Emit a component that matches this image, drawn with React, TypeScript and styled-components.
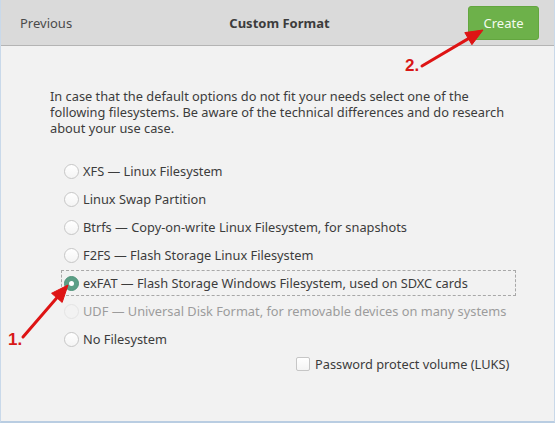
import React from "react";
import styled, { createGlobalStyle } from "styled-components";

const Global = createGlobalStyle`
  html, body { margin: 0; padding: 0; background: #f2f2f2; }
  body { font-family: "Noto Sans", "DejaVu Sans", sans-serif; }
  * { box-sizing: border-box; }
`;

const Window = styled.div`
  position: relative;
  width: 555px;
  height: 423px;
  background: #f2f2f2;
  border-left: 1px solid #c9d9ea;
  border-right: 1px solid #c9d9ea;
  border-bottom: 2px solid #b9cde2;
  display: flex;
  flex-direction: column;
  color: #3c3c3c;
  font-size: 12.8px;
  overflow: hidden;
`;

const Header = styled.div`
  height: 46px;
  flex: none;
  background: #dadada;
  border-bottom: 1px solid #b4b4b4;
  display: grid;
  grid-template-columns: 1fr auto 1fr;
  align-items: center;
  padding: 0 15px 0 19px;
`;

const HeaderText = styled.div`
  font-size: 13px;
  color: #4a4a4a;
`;

const Title = styled.div`
  font-size: 13px;
  font-weight: 700;
  color: #3c3c3c;
`;

const CreateButton = styled.button`
  justify-self: end;
  width: 71px;
  height: 34px;
  border: 1px solid #63a63f;
  border-radius: 3px;
  background: #6db14a;
  color: #f4fbef;
  font-family: inherit;
  font-size: 13px;
`;

const Body = styled.div`
  flex: 1;
  display: flex;
  flex-direction: column;
  padding: 42px 30px 0 49px;
`;

const Intro = styled.div`
  display: flex;
  flex-direction: column;
  color: #3c3c3c;
`;

const IntroLine = styled.span`
  display: block;
  height: 16px;
  line-height: 15px;
  padding-top: 1px;
  overflow: hidden;
  white-space: nowrap;
`;

const List = styled.div`
  margin-top: 21px;
  margin-left: 11px;
  width: 455px;
  display: flex;
  flex-direction: column;
`;

const Row = styled.div<{ $focus?: boolean; $disabled?: boolean }>`
  height: 28px;
  display: flex;
  align-items: center;
  gap: 4px;
  padding-left: 3px;
  color: ${(p) => (p.$disabled ? "#9c9c9c" : "#3c3c3c")};
  position: relative;
  &::before {
    content: "";
    display: ${(p) => (p.$focus ? "block" : "none")};
    position: absolute;
    left: 0;
    right: 0;
    top: 1px;
    bottom: 1px;
    border: 1px dashed #a8a8a8;
  }
`;

const Radio = styled.span<{ $checked?: boolean; $disabled?: boolean }>`
  width: 15px;
  height: 15px;
  border-radius: 50%;
  flex: none;
  display: flex;
  align-items: center;
  justify-content: center;
  border: 1px solid ${(p) => (p.$checked ? "#4f937a" : p.$disabled ? "#e4e4e4" : "#c6c6c6")};
  background: ${(p) =>
    p.$checked ? "#5b9f86" : p.$disabled ? "#f2f2f2" : "linear-gradient(#ffffff, #f4f4f4)"};
  &::after {
    content: "";
    display: ${(p) => (p.$checked ? "block" : "none")};
    width: 5px;
    height: 5px;
    border-radius: 50%;
    background: #ffffff;
  }
`;

const Footer = styled.div`
  margin-top: 0;
  padding-left: 246px;
  display: flex;
  align-items: center;
  gap: 5px;
  height: 22px;
`;

const Checkbox = styled.span`
  width: 14px;
  height: 14px;
  flex: none;
  border: 1px solid #c6c6c6;
  border-radius: 2px;
  background: linear-gradient(#ffffff, #f4f4f4);
`;

const Overlay = styled.svg`
  position: absolute;
  left: 0;
  top: 0;
  pointer-events: none;
`;

const Mark = styled.span<{ $x: number; $y: number }>`
  position: absolute;
  left: ${(p) => p.$x}px;
  top: ${(p) => p.$y}px;
  font-family: "Liberation Sans", Arial, sans-serif;
  font-weight: 700;
  font-size: 17px;
  line-height: 17px;
  color: #d81717;
`;

const options = [
  { label: "XFS — Linux Filesystem" },
  { label: "Linux Swap Partition" },
  { label: "Btrfs — Copy-on-write Linux Filesystem, for snapshots" },
  { label: "F2FS — Flash Storage Linux Filesystem" },
  { label: "exFAT — Flash Storage Windows Filesystem, used on SDXC cards", checked: true },
  { label: "UDF — Universal Disk Format, for removable devices on many systems", disabled: true },
  { label: "No Filesystem" },
];

const introLines = [
  "In case that the default options do not fit your needs select one of the",
  "following filesystems. Be aware of the technical differences and do research",
  "about your use case.",
];

function Arrow({ x1, y1, x2, y2 }: { x1: number; y1: number; x2: number; y2: number }) {
  const dx = x2 - x1;
  const dy = y2 - y1;
  const len = Math.hypot(dx, dy);
  const ux = dx / len;
  const uy = dy / len;
  const hl = 17;
  const hw = 7;
  const bx = x2 - ux * hl;
  const by = y2 - uy * hl;
  const px = -uy;
  const py = ux;
  return (
    <g fill="#de1414" stroke="#de1414">
      <line x1={x1} y1={y1} x2={bx + ux * 2} y2={by + uy * 2} strokeWidth={3} strokeLinecap="round" />
      <polygon
        points={`${x2},${y2} ${bx + px * hw},${by + py * hw} ${bx - px * hw},${by - py * hw}`}
        strokeWidth={1}
        strokeLinejoin="round"
      />
    </g>
  );
}

export default function App() {
  return (
    <Window>
      <Global />
      <Header>
        <HeaderText>Previous</HeaderText>
        <Title>Custom Format</Title>
        <CreateButton>Create</CreateButton>
      </Header>
      <Body>
        <Intro>
          {introLines.map((l) => (
            <IntroLine key={l}>{l}</IntroLine>
          ))}
        </Intro>
        <List>
          {options.map((o) => (
            <Row key={o.label} $focus={o.checked} $disabled={o.disabled}>
              <Radio $checked={o.checked} $disabled={o.disabled} />
              <span>{o.label}</span>
            </Row>
          ))}
        </List>
        <Footer>
          <Checkbox />
          <span>Password protect volume (LUKS)</span>
        </Footer>
      </Body>
      <Overlay width="555" height="423">
        <Arrow x1={22} y1={337} x2={67} y2={285} />
        <Arrow x1={421} y1={66} x2={482} y2={30} />
      </Overlay>
      <Mark $x={7} $y={331}>1.</Mark>
      <Mark $x={404} $y={57}>2.</Mark>
    </Window>
  );
}
